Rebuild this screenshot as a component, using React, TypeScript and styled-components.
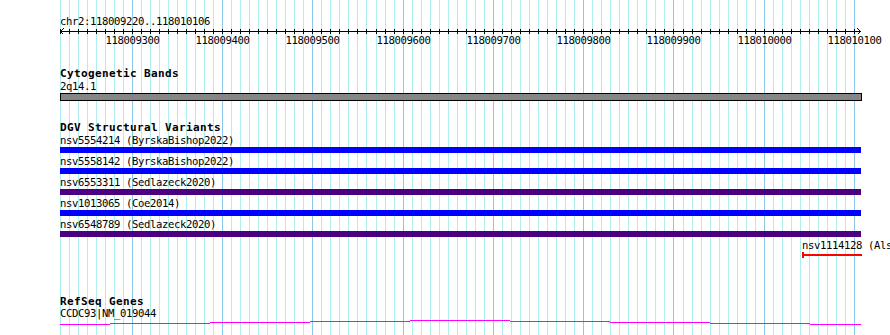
import React from "react";
import styled, { createGlobalStyle } from "styled-components";

const START = 118009220;
const LEFT = 60;
const SCALE = 800 / 886;
const xOf = (bp: number) => LEFT + (bp - START) * SCALE;

const Global = createGlobalStyle`
  html, body { margin: 0; padding: 0; background: #ffffff; }
  body { overflow: hidden; }
`;

const Page = styled.div`
  position: relative;
  width: 890px;
  height: 335px;
  overflow: hidden;
  background: #ffffff;
  color: #000000;
  font-family: "DejaVu Sans Mono", "Liberation Mono", monospace;
`;

const GridLayer = styled.svg`
  position: absolute;
  left: 0;
  top: 0;
  z-index: 0;
`;

const Panel = styled.div`
  position: relative;
  z-index: 1;
  width: 802px;
  padding-left: 60px;
  display: flex;
  flex-direction: column;
`;

const RulerBlock = styled.div`
  padding-top: 15px;
  display: flex;
  flex-direction: column;
`;

const Coord = styled.div`
  font-size: 10.6px;
  letter-spacing: -0.38px;
  line-height: 13px;
  white-space: nowrap;
`;

const RulerSvg = styled.svg`
  display: block;
  overflow: visible;
`;

const Track = styled.section<{ $gap: number }>`
  margin-top: ${(p) => p.$gap}px;
  display: flex;
  flex-direction: column;
`;

const TrackTitle = styled.div`
  font-weight: bold;
  font-size: 11px;
  letter-spacing: 0.38px;
  line-height: 13px;
  white-space: nowrap;
`;

const FeatureLabel = styled.div<{ $lh?: number }>`
  font-size: 10.6px;
  letter-spacing: -0.38px;
  line-height: ${(p) => p.$lh ?? 13}px;
  white-space: nowrap;
`;

const FeatureRow = styled.div`
  display: flex;
  flex-direction: column;
  margin-bottom: 2px;
`;

const Lane = styled.div<{ $h: number }>`
  height: ${(p) => p.$h}px;
  display: flex;
  align-items: center;
`;

const SolidBar = styled.div<{ $color: string }>`
  height: 100%;
  background: ${(p) => p.$color};
  flex: none;
`;

const BandBar = styled.div`
  height: 100%;
  box-sizing: border-box;
  border: 1px solid #000000;
  background: #868686;
  flex: none;
`;

const LineFeature = styled.div`
  height: 100%;
  display: flex;
  align-items: center;
  flex: none;
`;

const EndCap = styled.div<{ $color: string }>`
  width: 2px;
  height: 100%;
  background: ${(p) => p.$color};
  flex: none;
`;

const Stem = styled.div<{ $color: string }>`
  flex: 1;
  height: 2px;
  background: ${(p) => p.$color};
`;

const GeneSvg = styled.svg`
  display: block;
`;

type Variant = {
  id: string;
  study: string;
  color: string;
  start: number;
  end: number;
  kind: "bar" | "line";
};

const variants: Variant[] = [
  { id: "nsv5554214", study: "ByrskaBishop2022", color: "#0000ff", start: 117990000, end: 118030000, kind: "bar" },
  { id: "nsv5558142", study: "ByrskaBishop2022", color: "#0000ff", start: 117990000, end: 118030000, kind: "bar" },
  { id: "nsv6553311", study: "Sedlazeck2020", color: "#4b0082", start: 117990000, end: 118030000, kind: "bar" },
  { id: "nsv1013065", study: "Coe2014", color: "#0000ff", start: 117990000, end: 118030000, kind: "bar" },
  { id: "nsv6548789", study: "Sedlazeck2020", color: "#4b0082", start: 117990000, end: 118030000, kind: "bar" },
  { id: "nsv1114128", study: "Alsmadi2014", color: "#ff0000", start: 118010042, end: 118030000, kind: "line" },
];

const gridLines: { x: number; major: boolean }[] = [];
for (let k = 0; k <= 88; k++) {
  const bp = START + k * 10;
  gridLines.push({ x: Math.floor(xOf(bp)), major: bp % 100 === 0 });
}

const majors = gridLines
  .filter((g) => g.major)
  .map((g, i) => ({ x: g.x, label: String(118009300 + i * 100) }));

const geneSegments: [number, number, number][] = [
  [60, 110, 324],
  [110, 210, 323],
  [210, 310, 322],
  [310, 410, 321],
  [410, 510, 320],
  [510, 610, 321],
  [610, 710, 322],
  [710, 810, 323],
  [810, 861, 324],
];

function span(start: number, end: number, right: number) {
  const a = Math.max(LEFT, Math.round(xOf(start)));
  const b = Math.min(right, Math.round(xOf(end)));
  return { offset: a - LEFT, width: b - a };
}

function Ruler() {
  return (
    <RulerSvg width={830} height={19}>
      <rect x={0} y={3} width={801} height={1} fill="#000" />
      {gridLines.map((g) => (
        <rect key={g.x} x={g.x - LEFT} y={1} width={1} height={5} fill="#000" />
      ))}
      <path d="M3.5 0.5 L0.5 3.5 L3.5 6.5" stroke="#000" fill="none" shapeRendering="crispEdges" />
      <path d="M797.5 0.5 L800.5 3.5 L797.5 6.5" stroke="#000" fill="none" shapeRendering="crispEdges" />
      {majors.map((m) => (
        <text
          key={m.label}
          x={m.x - LEFT - 26.5}
          y={16}
          fontFamily='"DejaVu Sans Mono", "Liberation Mono", monospace'
          fontSize={10.6}
          letterSpacing={-0.38}
          fill="#000"
        >
          {m.label}
        </text>
      ))}
    </RulerSvg>
  );
}

function VariantRow({ v }: { v: Variant }) {
  const s = span(v.start, v.end, v.kind === "line" ? 862 : 861);
  return (
    <FeatureRow>
      <FeatureLabel style={{ marginLeft: s.offset }}>
        {v.id} ({v.study})
      </FeatureLabel>
      <Lane $h={6}>
        {v.kind === "bar" ? (
          <SolidBar $color={v.color} style={{ marginLeft: s.offset, width: s.width }} />
        ) : (
          <LineFeature style={{ marginLeft: s.offset, width: s.width }}>
            <EndCap $color={v.color} />
            <Stem $color={v.color} />
          </LineFeature>
        )}
      </Lane>
    </FeatureRow>
  );
}

export default function App() {
  return (
    <>
      <Global />
      <Page>
        <GridLayer width={890} height={335}>
          {gridLines.map((g) => (
            <rect key={g.x} x={g.x} y={0} width={1} height={335} fill={g.major ? "#8cc8ec" : "#afeeee"} />
          ))}
        </GridLayer>
        <Panel>
          <RulerBlock>
            <Coord>chr2:118009220..118010106</Coord>
            <Ruler />
          </RulerBlock>

          <Track $gap={20}>
            <TrackTitle>Cytogenetic Bands</TrackTitle>
            <FeatureLabel>2q14.1</FeatureLabel>
            <Lane $h={8}>
              <BandBar style={{ width: 802 }} />
            </Lane>
          </Track>

          <Track $gap={20}>
            <TrackTitle>DGV Structural Variants</TrackTitle>
            {variants.map((v) => (
              <VariantRow key={v.id} v={v} />
            ))}
          </Track>

          <Track $gap={35}>
            <TrackTitle>RefSeq Genes</TrackTitle>
            <FeatureLabel $lh={11}>CCDC93|NM_019044</FeatureLabel>
            <GeneSvg width={802} height={16}>
              {geneSegments.map(([a, b, y]) => (
                <rect key={a} x={a - LEFT} y={y - 319} width={b - a} height={1} fill="#ff00ff" />
              ))}
            </GeneSvg>
          </Track>
        </Panel>
      </Page>
    </>
  );
}
